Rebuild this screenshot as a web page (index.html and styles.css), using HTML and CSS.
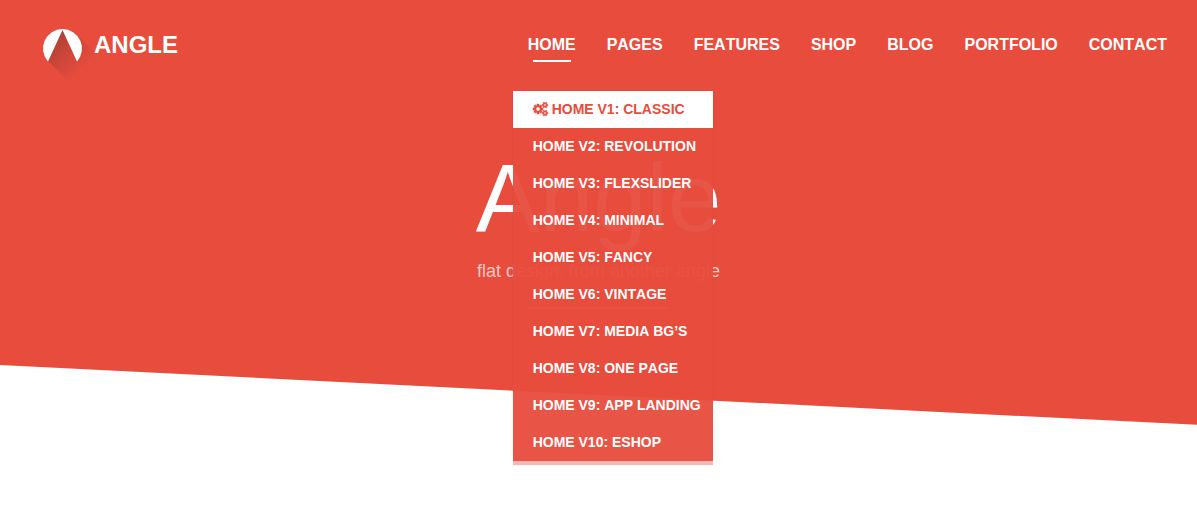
FILE: index.html
```html
<!DOCTYPE html>
<html lang="en">
<head>
<meta charset="utf-8">
<meta name="viewport" content="width=device-width, initial-scale=1">
<title>Angle</title>
<link rel="stylesheet" href="styles.css">
</head>
<body>
<header class="header">
  <a class="brand" href="#">
    <svg class="brand-mark" viewBox="0 0 40 40" aria-hidden="true">
      <defs>
        <linearGradient id="cast" gradientUnits="userSpaceOnUse" x1="10" y1="12" x2="40" y2="42">
          <stop offset="0" stop-color="#222" stop-opacity=".28"/>
          <stop offset=".5" stop-color="#222" stop-opacity=".12"/>
          <stop offset="1" stop-color="#222" stop-opacity="0"/>
        </linearGradient>
      </defs>
      <path fill="url(#cast)" d="M19.500 0L33 5L56 28L28 55L5 32Z"/>
      <path fill="#fff" d="M19.500 0A19.500 19.500 0 0 0 5 32.500L19.500 1L34 32.500A19.500 19.500 0 0 0 19.500 0Z"/>
    </svg>
    <span class="brand-name">ANGLE</span>
  </a>
  <nav aria-label="Main">
    <ul class="menu">
      <li class="menu-item">
        <a class="menu-link current" href="#">HOME</a>
        <ul class="dropdown">
          <li><a class="dropdown-link selected" href="#"><svg class="cogs" viewBox="0 0 1920 1792" aria-hidden="true"><path d="M896 896q0-106-75-181t-181-75-181 75-75 181 75 181 181 75 181-75 75-181zm768 512q0-52-38-90t-90-38-90 38-38 90q0 53 37.500 90.500t90.500 37.500 90.500-37.500 37.500-90.500zm0-1024q0-52-38-90t-90-38-90 38-38 90q0 53 37.500 90.500t90.500 37.500 90.500-37.500 37.500-90.500zm-384 421v185q0 10-7 19.500t-16 10.500l-155 24q-11 35-32 76 34 48 90 115 7 11 7 20 0 12-7 19-23 30-82.500 89.500t-78.500 59.500q-11 0-21-7l-115-90q-37 19-77 31-11 108-23 155-7 24-30 24h-186q-11 0-20-7.500t-10-17.500l-23-153q-34-10-75-31l-118 89q-7 7-20 7-11 0-21-8-144-133-144-160 0-9 7-19 10-14 41-53t47-61q-23-44-35-82l-152-24q-10-1-17-9.500t-7-19.500v-185q0-10 7-19.500t16-10.500l155-24q11-35 32-76-34-48-90-115-7-11-7-20 0-12 7-20 22-30 82-89t79-59q11 0 21 7l115 90q34-18 77-32 11-108 23-154 7-24 30-24h186q11 0 20 7.500t10 17.500l23 153q34 10 75 31l118-89q8-7 20-7 11 0 21 8 144 133 144 160 0 8-7 19-12 16-42 54t-45 60q23 48 34 82l152 23q10 2 17 10.500t7 19.500zm640 533v140q0 16-149 31-12 27-30 52 51 113 51 138 0 4-4 7-122 71-124 71-8 0-46-47t-52-68q-20 2-30 2t-30-2q-14 21-52 68t-46 47q-2 0-124-71-4-3-4-7 0-25 51-138-18-25-30-52-149-15-149-31v-140q0-16 149-31 13-29 30-52-51-113-51-138 0-4 4-7 4-2 35-20t59-34 30-16q8 0 46 46.500t52 67.500q20-2 30-2t30 2q51-71 92-112l6-2q4 0 124 70 4 3 4 7 0 25-51 138 17 23 30 52 149 15 149 31zm0-1024v140q0 16-149 31-12 27-30 52 51 113 51 138 0 4-4 7-122 71-124 71-8 0-46-47t-52-68q-20 2-30 2t-30-2q-14 21-52 68t-46 47q-2 0-124-71-4-3-4-7 0-25 51-138-18-25-30-52-149-15-149-31v-140q0-16 149-31 13-29 30-52-51-113-51-138 0-4 4-7 4-2 35-20t59-34 30-16q8 0 46 46.500t52 67.500q20-2 30-2t30 2q51-71 92-112l6-2q4 0 124 70 4 3 4 7 0 25-51 138 17 23 30 52 149 15 149 31z"/></svg>HOME V1: CLASSIC</a></li>
          <li><a class="dropdown-link" href="#">HOME V2: REVOLUTION</a></li>
          <li><a class="dropdown-link" href="#">HOME V3: FLEXSLIDER</a></li>
          <li><a class="dropdown-link" href="#">HOME V4: MINIMAL</a></li>
          <li><a class="dropdown-link" href="#">HOME V5: FANCY</a></li>
          <li><a class="dropdown-link" href="#">HOME V6: VINTAGE</a></li>
          <li><a class="dropdown-link" href="#">HOME V7: MEDIA BG’S</a></li>
          <li><a class="dropdown-link" href="#">HOME V8: ONE PAGE</a></li>
          <li><a class="dropdown-link" href="#">HOME V9: APP LANDING</a></li>
          <li><a class="dropdown-link" href="#">HOME V10: ESHOP</a></li>
        </ul>
      </li>
      <li class="menu-item"><a class="menu-link" href="#">PAGES</a></li>
      <li class="menu-item"><a class="menu-link" href="#">FEATURES</a></li>
      <li class="menu-item"><a class="menu-link" href="#">SHOP</a></li>
      <li class="menu-item"><a class="menu-link" href="#">BLOG</a></li>
      <li class="menu-item"><a class="menu-link" href="#">PORTFOLIO</a></li>
      <li class="menu-item"><a class="menu-link" href="#">CONTACT</a></li>
    </ul>
  </nav>
</header>
<main class="intro">
  <h1 class="title">Angle</h1>
  <p class="tagline">flat design, from another angle</p>
  <hr class="rule">
</main>
<div class="slope"></div>
</body>
</html>
```
FILE: styles.css
```css
* {
  box-sizing: border-box;
}

body {
  min-height: 100vh;
  margin: 0;
  background: #fff;
  color: #fff;
  font-family: "Liberation Sans", Arial, sans-serif;
  font-kerning: none;
}

a {
  color: inherit;
  text-decoration: none;
}

ul {
  margin: 0;
  padding: 0;
  list-style: none;
}

.header,
.intro,
.slope {
  background: #e84c3d;
}

.header {
  position: relative;
  z-index: 2;
  display: flex;
  justify-content: space-between;
  align-items: flex-start;
  padding: 0 15px 0 43px;
}

.brand {
  display: flex;
  gap: 11px;
  padding-top: 29px;
}

.brand-mark {
  width: 40px;
  height: 40px;
  overflow: visible;
}

.brand-name {
  font-size: 24px;
  font-weight: bold;
  line-height: 32px;
}

.menu {
  display: flex;
  gap: 1px;
}

.menu-item {
  position: relative;
}

.menu-link {
  display: block;
  padding: 33px 15px 34px;
  font-size: 16px;
  font-weight: bold;
  line-height: 24px;
}

.current::after {
  content: "";
  position: absolute;
  top: 60px;
  right: 20px;
  left: 20px;
  height: 2px;
  background: #fff;
}

.dropdown {
  position: absolute;
  top: 100%;
  left: 0;
  width: 200px;
  border-bottom: 4px solid rgba(231, 76, 60, 0.4);
  box-shadow: 0 0 2px rgba(0, 0, 0, 0.08);
}

.dropdown-link {
  display: block;
  padding-left: 20px;
  background: rgba(231, 76, 60, 0.95);
  font-size: 14px;
  font-weight: bold;
  line-height: 37px;
  white-space: nowrap;
}

.selected {
  background: #fff;
  color: #e74c3c;
}

.cogs {
  width: 15px;
  height: 14px;
  margin-right: 4px;
  vertical-align: -2px;
  overflow: visible;
  fill: currentColor;
  stroke: currentColor;
  stroke-width: 70px;
}

.intro {
  padding: 59px 20px 56px;
  text-align: center;
}

.title {
  margin: 0 0 13px;
  font-size: 96px;
  font-weight: normal;
  line-height: 96px;
}

.tagline {
  margin: 0 0 24px;
  color: rgba(255, 255, 255, 0.7);
  font-size: 18px;
  line-height: 24px;
}

.rule {
  width: 140px;
  height: 2px;
  margin: 0 auto;
  border: 0;
  background: rgba(255, 255, 255, 0.7);
}

.slope {
  height: 5vw;
  clip-path: polygon(0 0, 100% 0, 100% 100%);
}
```
